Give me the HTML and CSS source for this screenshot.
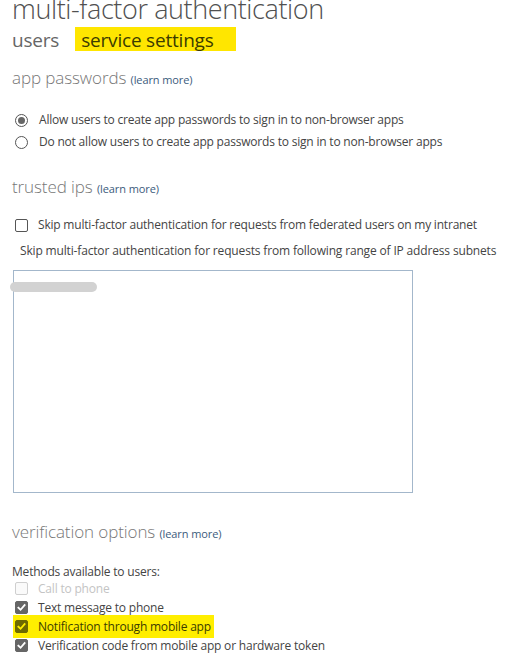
FILE: index.html
```html
<!DOCTYPE html>
<html>
<head>
<meta charset="utf-8">
<link rel="stylesheet" href="styles.css">
</head>
<body>
<div class="page">
  <h1 class="title">multi-factor authentication</h1>
  <div class="tabs">
    <span class="tab">users</span>
    <span class="tab tab-active">service settings</span>
  </div>

  <section class="section">
    <h2 class="heading">app passwords <a class="learn">(learn more)</a></h2>
    <div class="options radios">
      <label class="opt"><span class="radio radio-on"></span><span>Allow users to create app passwords to sign in to non-browser apps</span></label>
      <label class="opt"><span class="radio"></span><span>Do not allow users to create app passwords to sign in to non-browser apps</span></label>
    </div>
  </section>

  <section class="section trusted">
    <h2 class="heading">trusted ips <a class="learn">(learn more)</a></h2>
    <label class="opt opt-skip"><span class="check"></span><span>Skip multi-factor authentication for requests from federated users on my intranet</span></label>
    <p class="subnets">Skip multi-factor authentication for requests from following range of IP address subnets</p>
    <div class="ipbox-wrap">
      <div class="ipbox"></div>
      <span class="redact"></span>
    </div>
  </section>

  <section class="section verify">
    <h2 class="heading">verification options <a class="learn">(learn more)</a></h2>
    <p class="methods">Methods available to users:</p>
    <div class="checks">
      <label class="row disabled"><span class="check"></span><span>Call to phone</span></label>
      <label class="row"><span class="check checked"><svg viewBox="0 0 12 12"><path d="M2.6 6.2 L5 8.5 L9.4 3.4"/></svg></span><span>Text message to phone</span></label>
      <label class="row hl"><span class="check checked"><svg viewBox="0 0 12 12"><path d="M2.6 6.2 L5 8.5 L9.4 3.4"/></svg></span><span>Notification through mobile app</span></label>
      <label class="row"><span class="check checked"><svg viewBox="0 0 12 12"><path d="M2.6 6.2 L5 8.5 L9.4 3.4"/></svg></span><span>Verification code from mobile app or hardware token</span></label>
    </div>
  </section>
</div>
</body>
</html>
```

FILE: styles.css
```css
html, body {
  margin: 0;
  padding: 0;
  background: #fff;
}
body {
  font-family: "Open Sans", "Noto Sans", sans-serif;
  color: #444;
}
.page {
  padding: 0 0 0 12px;
}
.title {
  margin: -9px 0 0 0;
  font-size: 27px;
  font-weight: 300;
  color: #505050;
  line-height: 36px;
  letter-spacing: -0.4px;
}
.tabs {
  display: flex;
  gap: 16px;
  margin-top: 0;
}
.tab {
  font-size: 19px;
  font-weight: 400;
  color: #666;
  line-height: 22px;
  padding-top: 2px;
  letter-spacing: -0.2px;
}
.tab-active {
  background: #ffe600;
  color: #3c3c00;
  padding: 2px 22px 0 6px;
}
.section {
  margin: 0;
}
.heading {
  margin: 16px 0 0 0;
  font-size: 17px;
  font-weight: 300;
  color: #777;
  line-height: 22px;
  letter-spacing: -0.1px;
}
.learn {
  font-size: 11px;
  font-weight: 400;
  color: #3b5b7c;
  letter-spacing: -0.1px;
}
.options {
  margin-top: 18px;
  display: flex;
  flex-direction: column;
}
.opt {
  display: flex;
  align-items: center;
  gap: 11px;
  font-size: 12px;
  line-height: 22px;
  color: #444;
  padding-left: 3px;
  letter-spacing: -0.2px;
}
.radio {
  width: 11px;
  height: 11px;
  border: 1px solid #555;
  border-radius: 50%;
  box-sizing: content-box;
  display: inline-flex;
  align-items: center;
  justify-content: center;
  flex: none;
}
.radio-on::after {
  content: "";
  width: 7px;
  height: 7px;
  border-radius: 50%;
  background: #666;
}
.trusted .heading {
  margin-top: 23px;
}
.opt-skip {
  margin-top: 14px;
  gap: 10px;
}
.check {
  width: 11px;
  height: 11px;
  border: 1px solid #555;
  border-radius: 2px;
  box-sizing: content-box;
  flex: none;
  display: inline-flex;
  align-items: center;
  justify-content: center;
}
.subnets {
  margin: 5px 0 0 8px;
  font-size: 12px;
  line-height: 20px;
  color: #444;
  letter-spacing: -0.16px;
}
.ipbox-wrap {
  position: relative;
  margin-top: 9px;
}
.ipbox {
  width: 398px;
  height: 221px;
  border: 1px solid #a3b7cb;
  margin-left: 1px;
}
.redact {
  position: absolute;
  left: -2px;
  top: 12px;
  width: 87px;
  height: 10px;
  border-radius: 5px;
  background: #d2d2d2;
}
.verify .heading {
  margin-top: 28px;
}
.methods {
  margin: 19px 0 0 0;
  font-size: 12px;
  line-height: 15px;
  color: #444;
  letter-spacing: -0.2px;
}
.checks {
  display: flex;
  flex-direction: column;
}
.row {
  display: flex;
  align-items: center;
  gap: 10px;
  font-size: 12px;
  line-height: 19px;
  color: #444;
  padding-left: 3px;
  width: fit-content;
  letter-spacing: -0.2px;
}
.row.disabled {
  color: #c4c4c4;
}
.row.disabled .check {
  border-color: #cfcfcf;
  background: #fafafa;
}
.check.checked {
  background: #666;
  border-color: #666;
}
.check svg {
  width: 11px;
  height: 11px;
}
.check svg path {
  fill: none;
  stroke: #fff;
  stroke-width: 2;
  stroke-linecap: square;
}
.row.hl {
  background: #ffee00;
  color: #3c3c00;
  margin: -2px 0 -2px 1px;
  padding: 2px 3px 2px 2px;
}
.row.hl .check {
  background: #6e6a00;
  border-color: #6e6a00;
}
.row.hl .check svg path {
  stroke: #ffee00;
}
```
